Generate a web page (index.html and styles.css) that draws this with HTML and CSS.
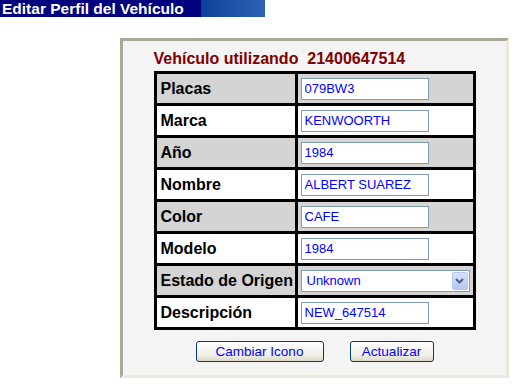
FILE: index.html
```html
<!DOCTYPE html>
<html lang="es">
<head>
    <meta charset="UTF-8">
    <title>Editar Perfil del Vehículo</title>
    <link rel="stylesheet" href="styles.css">
</head>
<body>
    <div class="page-title">Editar Perfil del Vehículo</div>

    <div class="panel">
        <div class="form-wrap">
            <div class="vehicle-title">Vehículo utilizando&nbsp; 21400647514</div>
            <table class="profile">
                <tr class="shade">
                    <td class="label">Placas</td>
                    <td class="value"><input type="text" value="079BW3"></td>
                </tr>
                <tr>
                    <td class="label">Marca</td>
                    <td class="value"><input type="text" value="KENWOORTH"></td>
                </tr>
                <tr class="shade">
                    <td class="label">Año</td>
                    <td class="value"><input type="text" value="1984"></td>
                </tr>
                <tr>
                    <td class="label">Nombre</td>
                    <td class="value"><input type="text" value="ALBERT SUAREZ"></td>
                </tr>
                <tr class="shade">
                    <td class="label">Color</td>
                    <td class="value"><input type="text" value="CAFE"></td>
                </tr>
                <tr>
                    <td class="label">Modelo</td>
                    <td class="value"><input type="text" value="1984"></td>
                </tr>
                <tr class="shade">
                    <td class="label">Estado de Origen</td>
                    <td class="value">
                        <div class="select-box">
                            <select>
                                <option>Unknown</option>
                            </select>
                            <span class="select-btn">
                                <svg width="9" height="6" viewBox="0 0 9 6"><path d="M1 1 L4.5 4.5 L8 1" fill="none" stroke="#4d6185" stroke-width="2"/></svg>
                            </span>
                        </div>
                    </td>
                </tr>
                <tr>
                    <td class="label">Descripción</td>
                    <td class="value"><input type="text" value="NEW_647514"></td>
                </tr>
            </table>
            <div class="actions">
                <button class="btn btn-icon">Cambiar Icono</button>
                <button class="btn btn-update">Actualizar</button>
            </div>
        </div>
    </div>
</body>
</html>
```

FILE: styles.css
```css
body {
    margin: 0;
    font-family: "Liberation Sans", Arial, sans-serif;
    background-color: #ffffff;
}
.page-title {
    width: 263px;
    height: 17px;
    padding-left: 2px;
    background: linear-gradient(to right, #00007e 0, #00007e 201px, #0c3f9c 201px, #2c64b2 263px);
    color: #ffffff;
    font-weight: bold;
    font-size: 15.5px;
    line-height: 17px;
    white-space: nowrap;
}
.panel {
    box-sizing: border-box;
    width: 389px;
    height: 340px;
    margin: 21px 0 0 120px;
    border-style: solid;
    border-width: 3px;
    border-color: #aca899 #ece9d8 #ece9d8 #aca899;
    background-color: #f4f4f4;
    display: flex;
    justify-content: center;
}
.form-wrap {
    width: 322px;
    padding-top: 9px;
}
.vehicle-title {
    color: #800000;
    font-weight: bold;
    font-size: 16px;
    line-height: 18px;
    margin-bottom: 3px;
    white-space: nowrap;
}
.profile {
    width: 322px;
    border-collapse: collapse;
    border: 3px solid #000000;
}
.profile td {
    border: 3px solid #000000;
    height: 29px;
    padding: 0;
    background-color: #ffffff;
}
.profile tr.shade td {
    background-color: #d4d4d4;
}
.profile .label {
    width: 134px;
    padding-left: 4px;
    font-weight: bold;
    font-size: 16px;
    color: #000000;
    white-space: nowrap;
}
.profile .value {
    padding-left: 3px;
}
.profile input {
    box-sizing: border-box;
    width: 128px;
    height: 22px;
    margin: 0;
    padding: 0 3px;
    border: 1px solid #7f9db9;
    background-color: #ffffff;
    color: #0000ff;
    font-family: "Liberation Sans", Arial, sans-serif;
    font-size: 13px;
    display: block;
}
.select-box {
    position: relative;
    width: 169px;
    height: 22px;
}
.select-box select {
    appearance: none;
    -webkit-appearance: none;
    box-sizing: border-box;
    width: 169px;
    height: 22px;
    margin: 0;
    padding: 0 5px;
    border: 1px solid #7f9db9;
    border-radius: 0;
    background-color: #ffffff;
    color: #0000ff;
    font-family: "Liberation Sans", Arial, sans-serif;
    font-size: 13px;
    display: block;
}
.select-btn {
    position: absolute;
    top: 2px;
    right: 2px;
    width: 16px;
    height: 18px;
    box-sizing: border-box;
    border: 1px solid #b7c9ef;
    border-radius: 2px;
    background: linear-gradient(#d6e2fb, #b4c8f5);
    display: flex;
    align-items: center;
    justify-content: center;
    pointer-events: none;
}
.actions {
    display: flex;
    justify-content: center;
    gap: 26px;
    margin-top: 11px;
}
.btn {
    box-sizing: border-box;
    height: 21px;
    padding: 0;
    border: 1px solid #003c74;
    border-radius: 3px;
    background: linear-gradient(#ffffff, #f0efe8 70%, #dcd8c8);
    color: #0000ff;
    font-family: "Liberation Sans", Arial, sans-serif;
    font-size: 13.5px;
    cursor: pointer;
}
.btn-icon {
    width: 128px;
}
.btn-update {
    width: 84px;
}
```
